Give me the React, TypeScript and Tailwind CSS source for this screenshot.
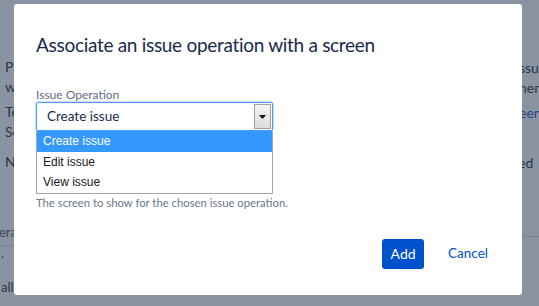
import React from "react";

const options = ["Create issue", "Edit issue", "View issue"];

function LeftStrip() {
  return (
    <div className="w-[14px] shrink-0 overflow-hidden text-[14px] leading-[20px] text-[#2b3648] whitespace-nowrap">
      <div className="pt-[57px] pl-[5px]">
        <p>P</p>
        <p>w</p>
        <p className="mt-[5px]">Te</p>
        <p>Se</p>
        <p className="mt-[10px]">N</p>
      </div>
      <p className="mt-[50px] -ml-[1px] text-[13px] text-[#3a4558]">era</p>
      <div className="mt-[3px] border-t border-[#7a8392]" />
      <p className="mt-[-3px] pl-[1px] text-[13px]">.</p>
      <p className="mt-[14px] pl-[1px] text-[13px]">all</p>
    </div>
  );
}

function RightStrip() {
  return (
    <div className="w-[17px] shrink-0 overflow-hidden text-[14px] leading-[20px] text-[#2b3648] whitespace-nowrap">
      <div className="pt-[58px] -ml-[3px]">
        <p>ssue</p>
        <p>hem</p>
        <p className="mt-[5px] text-[#24447f]">een</p>
        <p className="mt-[30px] -ml-[1px]">
          ed <span className="text-[10px] text-[#7a2a2a]">▼</span>
        </p>
      </div>
      <div className="mt-[62px] border-t border-[#7a8392]" />
    </div>
  );
}

export default function App() {
  return (
    <div
      className="flex w-[539px] h-[306px] overflow-hidden bg-[#8a93a2]"
      style={{ fontFamily: 'Lato, "Noto Sans", sans-serif' }}
    >
      <LeftStrip />

      {/* dialog */}
      <div className="mt-[4px] w-[508px] h-[291px] shrink-0 rounded-[3px] bg-white px-[22px] pt-[29px] flex flex-col">
        <h2 className="text-[19px] leading-[24px] tracking-[-0.3px] text-[#172b4d]">
          Associate an issue operation with a screen
        </h2>

        <label className="mt-[31px] text-[12px] leading-[14px] text-[#5e6c84]">Issue Operation</label>

        <div className="w-[237px]">
          <div className="h-[29px] rounded-[2px] border border-[#4c9aff] shadow-[0_0_2px_#4c9aff] flex items-center justify-between pl-[10px] pr-[1px]">
            <span className="text-[13.5px] text-[#172b4d]">Create issue</span>
            <span className="h-[25px] w-[17px] border border-[#a0a0a0] bg-gradient-to-b from-[#f4f4f4] to-[#dcdcdc] flex items-center justify-center">
              <svg width="7" height="4" viewBox="0 0 7 4">
                <path d="M0 0h7L3.5 4z" fill="#111" />
              </svg>
            </span>
          </div>
          <div
            className="border border-[#a8a8a8] border-t-0 bg-white"
            style={{ fontFamily: '"Liberation Sans", Arial, sans-serif' }}
          >
            {options.map((o, i) => (
              <div
                key={o}
                className={`h-[20.5px] pl-[6px] flex items-center text-[12px] ${
                  i === 0 ? "bg-[#3399ff] text-white" : "text-[#1a1a1a]"
                }`}
              >
                {o}
              </div>
            ))}
          </div>
        </div>

        <p className="mt-[1px] text-[11.3px] leading-[16px] text-[#6b778c]">
          The screen to show for the chosen issue operation.
        </p>

        <div className="mt-[28px] flex items-center justify-end gap-[24px] pr-[12px]">
          <button className="h-[30px] w-[42px] rounded-[3px] bg-[#0052cc] text-white text-[14px]">Add</button>
          <button className="text-[13.5px] text-[#0052cc]">Cancel</button>
        </div>
      </div>

      <RightStrip />
    </div>
  );
}
